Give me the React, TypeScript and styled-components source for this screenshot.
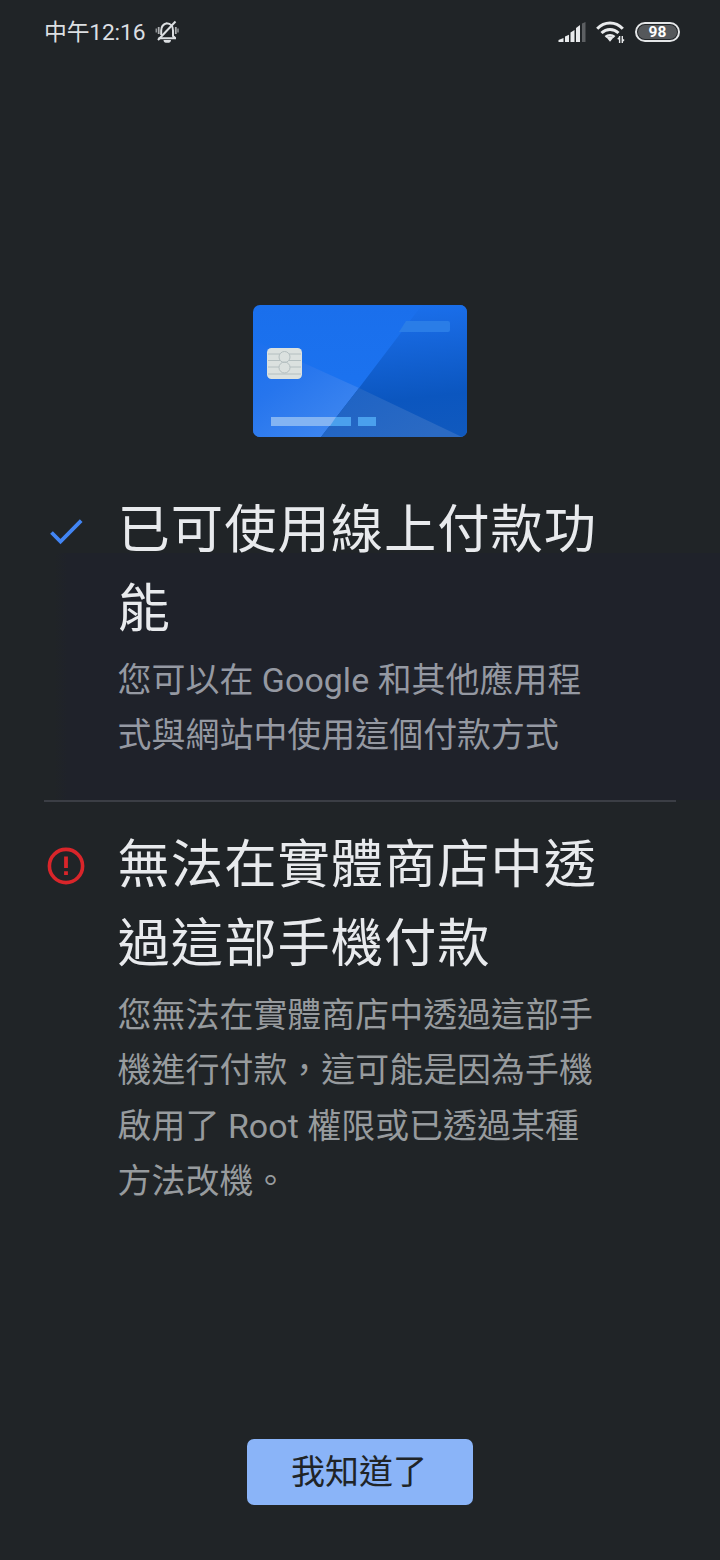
import React from "react";
import styled, { createGlobalStyle } from "styled-components";

const GlobalStyle = createGlobalStyle`
  * { box-sizing: border-box; }
  body {
    margin: 0;
    background: #202427;
    font-family: Roboto, "Noto Sans CJK TC", sans-serif;
  }
`;

const Screen = styled.div`
  width: 720px;
  height: 1560px;
  display: flex;
  flex-direction: column;
  background: #202427;
  overflow: hidden;
`;

const StatusBar = styled.header`
  height: 64px;
  padding: 0 40px 0 44px;
  display: flex;
  align-items: center;
  justify-content: space-between;
  color: #dcdfe2;
`;

const StatusGroup = styled.div<{ $gap: number }>`
  display: flex;
  align-items: center;
  gap: ${(p) => p.$gap}px;
`;

const Clock = styled.span`
  font-size: 22.8px;
  letter-spacing: -0.15px;
  line-height: 32px;
  padding-top: 1px;
  white-space: nowrap;
`;

const Battery = styled.div`
  width: 45px;
  height: 20px;
  border: 2px solid #e4e6e8;
  border-radius: 10px;
  background: #55585b;
  background-clip: content-box;
  padding: 1px;
  display: flex;
  align-items: center;
  justify-content: center;
  color: #fff;
  font-size: 15.5px;
  font-weight: 700;
  line-height: 16px;
`;

const Hero = styled.div`
  height: 427px;
  padding-top: 241px;
  display: flex;
  justify-content: center;
`;

const Section = styled.section<{ $height: number; $top?: number; $tinted?: boolean }>`
  height: ${(p) => p.$height}px;
  padding: ${(p) => p.$top ?? 0}px 0 0 44px;
  display: grid;
  grid-template-columns: 73.6px 1fr;
  align-content: start;
  background: ${(p) =>
    p.$tinted
      ? "linear-gradient(90deg, #202427, #1f222a 12px) 55px 62px / 665px 247px no-repeat"
      : "none"};
`;

const IconSlot = styled.div<{ $top: number }>`
  padding-top: ${(p) => p.$top}px;
  line-height: 0;
`;

const Title = styled.h1`
  margin: 0;
  font-size: 52.3px;
  letter-spacing: 0.98px;
  font-weight: 400;
  line-height: 79px;
  color: #e8eaed;
  white-space: nowrap;
`;

const Body = styled.p<{ $color: string }>`
  margin: 4px 0 0;
  font-size: 33.9px;
  letter-spacing: 0.06px;
  font-weight: 400;
  line-height: 55.3px;
  color: ${(p) => p.$color};
  white-space: nowrap;
`;

const Line = styled.span`
  display: block;
`;

const Divider = styled.hr`
  width: 632px;
  height: 2px;
  margin: 0 0 0 44px;
  border: 0;
  background: #3b3e45;
  flex: none;
`;

const Footer = styled.footer`
  margin-top: auto;
  padding-bottom: 55px;
  display: flex;
  justify-content: center;
`;

const Button = styled.button`
  width: 226px;
  height: 66px;
  padding: 0 2px 0 0;
  border: 0;
  border-radius: 7px;
  background: #8ab4f8;
  color: #202427;
  font: 400 34px/66px Roboto, "Noto Sans CJK TC", sans-serif;
`;

const MutedBell = () => (
  <svg width="24" height="24" viewBox="0 0 24 24" fill="none" stroke="#dcdfe2" strokeWidth="2">
    <path d="M3.500 18.200h17.500M6.200 15V10.500C6.200 6.500 8.500 4 12 3.200M11.500 3.200c4.500 0 6.500 3.400 6.500 7.300V16l2.500 2.200" />
    <path d="M20.500 1.500L3 20" strokeWidth="2" />
    <path d="M8.500 20h7.500a3.700 2.800 0 0 1-7.500 0z" fill="#dcdfe2" stroke="none" />
    <path d="M3.700 7v7M20.800 7v7" strokeWidth="1.800" opacity=".75" />
    <path d="M1.300 8.500v4M23 8.500v4" strokeWidth="1.500" opacity=".6" />
  </svg>
);

const Signal = () => (
  <svg width="28" height="21" viewBox="0 0 28 21" fill="#e8eaec">
    <path d="M.5 20v-2l5-2v4zM7 14.500l4-1.700V20H7zM12.500 10.500l4-2.500v12h-4zM18 6l4-3V20h-4z" />
    <path d="M24 1.500L27.500 0V20H24z" fill="#5c5f62" />
  </svg>
);

const Wifi = () => (
  <svg width="29" height="22" viewBox="0 0 29 22" fill="none" stroke="#e8eaec" strokeWidth="3">
    <path d="M1.200 7.800C8.500.1 19.500.1 26.800 7.800" />
    <path d="M5.500 12C10.500 7.200 17.500 7.200 22.500 12" />
    <path d="M9.500 16C12 13.600 16 13.600 18.500 16" strokeWidth="2.600" />
    <path d="M10.500 16.500c2-1.500 5-1.500 7 0L14 20.800z" fill="#e8eaec" stroke="none" />
    <path d="M23.600 15v7M26.300 15v7M21.800 18.300l1.800-2M28 18.500l-1.700 2" strokeWidth="1.400" />
  </svg>
);

const CardArt = () => (
  <svg width="214" height="132" viewBox="0 0 214 132">
    <defs>
      <linearGradient id="face" x1="0" y1="0" x2="0" y2="1">
        <stop offset="0" stopColor="#1a6fec" />
        <stop offset=".55" stopColor="#1b72ef" />
        <stop offset="1" stopColor="#2477ee" />
      </linearGradient>
      <linearGradient id="shade" x1=".6" y1="0" x2=".72" y2="1">
        <stop offset="0" stopColor="#1a6fec" />
        <stop offset=".2" stopColor="#1768df" />
        <stop offset=".45" stopColor="#115fcf" />
        <stop offset=".7" stopColor="#0b56bf" />
        <stop offset="1" stopColor="#1059be" />
      </linearGradient>
      <linearGradient id="lowLeft" x1="0" y1="0" x2=".8" y2="1">
        <stop offset="0" stopColor="#1b70ee" />
        <stop offset=".4" stopColor="#2675ed" />
        <stop offset="1" stopColor="#3f87f0" />
      </linearGradient>
      <linearGradient id="lowRight" x1="0" y1="0" x2="1" y2=".6">
        <stop offset="0" stopColor="#1c62c5" />
        <stop offset="1" stopColor="#2b6ac3" />
      </linearGradient>
      <clipPath id="cardClip">
        <rect width="214" height="132" rx="7" />
      </clipPath>
    </defs>
    <g clipPath="url(#cardClip)">
      <rect width="214" height="132" fill="url(#face)" />
      <path d="M0 35L106 83L68 132H0z" fill="url(#lowLeft)" />
      <path d="M106 83L169 0H214V132H68z" fill="url(#shade)" />
      <path d="M106 83L209 132H68z" fill="url(#lowRight)" />
      <path d="M153 16h42a2 2 0 0 1 2 2v7a2 2 0 0 1-2 2h-49z" fill="#2a7de7" />
      <path d="M18 112h70l-10 9H18z" fill="#83b4f3" />
      <path d="M83 112h15v9H77z" fill="#4aa0ed" />
      <rect x="105" y="112" width="18" height="9" fill="#4aa0ed" />
      <rect x="14" y="43" width="35" height="31" rx="4.500" fill="#dbe1df" />
      <g fill="none" stroke="#b4bfc0" strokeWidth="1">
        <path d="M15 49h12M36 49h12M15 55.500h12M36 55.500h12M15 62h11M37 62h11M15 69h33" />
        <circle cx="31.500" cy="52" r="5.500" />
        <circle cx="31.500" cy="62.500" r="5.500" />
      </g>
    </g>
  </svg>
);

const Check = () => (
  <svg width="44" height="44" viewBox="0 0 44 44" fill="none" stroke="#4285f4" strokeWidth="3.800">
    <path d="M7.500 22.500L16.500 31.500L37.200 10.700" />
  </svg>
);

const Alert = () => (
  <svg width="44" height="44" viewBox="0 0 44 44" fill="none" stroke="#d9252a">
    <circle cx="22" cy="22" r="16.600" strokeWidth="3.600" />
    <path d="M22 12.500V24M22 27.300v3.800" strokeWidth="3.800" />
  </svg>
);

const Lines = ({ items }: { items: string[] }) => (
  <>
    {items.map((text) => (
      <Line key={text}>{text}</Line>
    ))}
  </>
);

export default function App() {
  return (
    <>
      <GlobalStyle />
      <Screen>
        <StatusBar>
          <StatusGroup $gap={10}>
            <Clock>中午12:16</Clock>
            <MutedBell />
          </StatusGroup>
          <StatusGroup $gap={10}>
            <Signal />
            <Wifi />
            <Battery>98</Battery>
          </StatusGroup>
        </StatusBar>
        <Hero>
          <CardArt />
        </Hero>
        <Section $height={309} $tinted>
          <IconSlot $top={19}>
            <Check />
          </IconSlot>
          <div>
            <Title>
              <Lines items={["已可使用線上付款功", "能"]} />
            </Title>
            <Body $color="#9599a2">
              <Lines items={["您可以在 Google 和其他應用程", "式與網站中使用這個付款方式"]} />
            </Body>
          </div>
        </Section>
        <Divider />
        <Section $height={420} $top={24}>
          <IconSlot $top={18}>
            <Alert />
          </IconSlot>
          <div>
            <Title>
              <Lines items={["無法在實體商店中透", "過這部手機付款"]} />
            </Title>
            <Body $color="#979b9e">
              <Lines
                items={[
                  "您無法在實體商店中透過這部手",
                  "機進行付款，這可能是因為手機",
                  "啟用了 Root 權限或已透過某種",
                  "方法改機。",
                ]}
              />
            </Body>
          </div>
        </Section>
        <Footer>
          <Button type="button">我知道了</Button>
        </Footer>
      </Screen>
    </>
  );
}
